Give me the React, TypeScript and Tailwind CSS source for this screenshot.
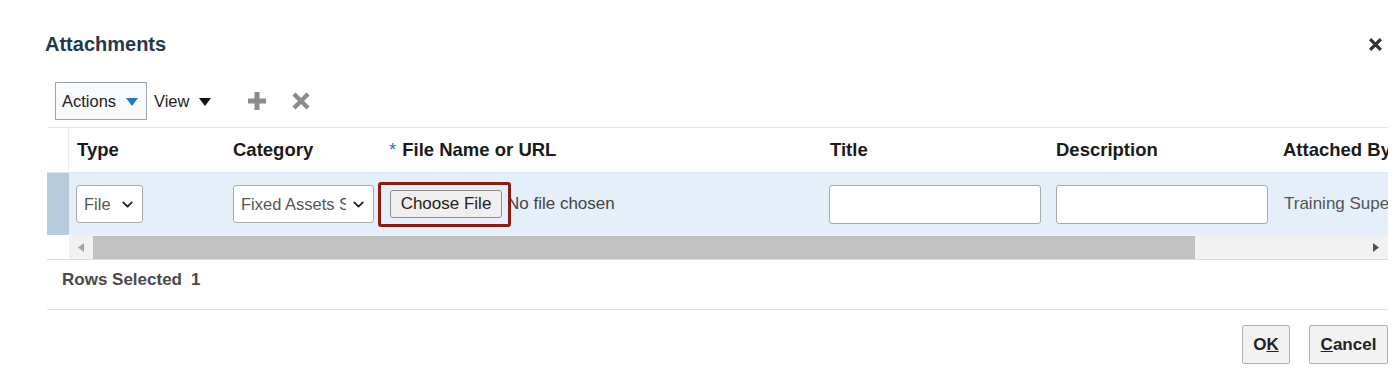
import { ChevronDown } from 'lucide-react';

const font = { fontFamily: '"Liberation Sans", Arial, sans-serif' };

function Caret({ className }: { className: string }) {
  return (
    <svg width="12" height="8" viewBox="0 0 12 8" className={className}>
      <path d="M0 0 L12 0 L6 8 Z" fill="currentColor" />
    </svg>
  );
}

function SelectBox({ label, width }: { label: string; width: string }) {
  return (
    <div
      className={`${width} h-[38px] flex items-center justify-between pl-[7px] pr-[6px] bg-white border border-[#a9a9a9] rounded-[3px] text-[16.5px] text-[#555] overflow-hidden whitespace-nowrap`}
    >
      <span className="overflow-hidden mr-[4px]">{label}</span>
      <ChevronDown className="w-[17px] h-[17px] shrink-0 text-[#222]" strokeWidth={2.5} />
    </div>
  );
}

export default function App() {
  return (
    <div className="w-[1395px] h-[388px] bg-white relative overflow-hidden" style={font}>
      {/* Header */}
      <div className="flex items-center justify-between pl-[45px] pr-[12px] pt-[32px]">
        <h1 className="text-[20px] leading-[24px] font-bold text-[#26384b]">Attachments</h1>
        <svg width="15" height="15" viewBox="0 0 14 14" className="text-[#333]">
          <path d="M2 2 L12 12 M12 2 L2 12" stroke="currentColor" strokeWidth="3" />
        </svg>
      </div>

      {/* Toolbar */}
      <div className="flex items-center pl-[55px] mt-[26px] h-[38px]">
        <div className="h-[38px] w-[92px] flex items-center pl-[6px] border border-[#9aa6b3] bg-[#f9fafb] text-[16.5px] text-[#222]">
          Actions
          <Caret className="ml-[10px] mt-[2px] text-[#1a7bd3]" />
        </div>
        <div className="flex items-center ml-[7px] text-[16.5px] text-[#222]">
          View
          <Caret className="ml-[10px] mt-[2px] text-[#111]" />
        </div>
        <svg width="20" height="20" viewBox="0 0 20 20" className="ml-[36px] text-[#8a8c8e]">
          <path d="M10 1 V19 M1 10 H19" stroke="currentColor" strokeWidth="5" />
        </svg>
        <svg width="20" height="20" viewBox="0 0 20 20" className="ml-[24px] text-[#8a8c8e]">
          <path d="M3 3 L17 17 M17 3 L3 17" stroke="currentColor" strokeWidth="4.5" />
        </svg>
      </div>

      {/* Table */}
      <div className="ml-[47px] w-[1341px] mt-[7px] border-t border-[#e6e6e6]">
        <div className="grid grid-cols-[22px_156px_151px_446px_226px_227px_1fr] h-[44px] items-center text-[18.5px] font-bold text-[#1a1a1a] whitespace-nowrap">
          <div className="h-full border-r border-[#ececec]" />
          <div className="pl-[8px]">Type</div>
          <div className="pl-[8px]">Category</div>
          <div className="pl-[13px]">
            <span className="text-[#1a7bd3] font-normal mr-[6px]">*</span>File Name or URL
          </div>
          <div className="pl-[8px]">Title</div>
          <div className="pl-[8px]">Description</div>
          <div className="pl-[8px] overflow-hidden">Attached By</div>
        </div>

        <div className="grid grid-cols-[22px_156px_151px_446px_226px_227px_1fr] h-[63px] items-center bg-[#e5eff9] border-t border-[#dde7f1]">
          <div className="h-full bg-[#b6cbdc]" />
          <div className="pl-[7px]">
            <SelectBox label="File" width="w-[67px]" />
          </div>
          <div className="pl-[8px]">
            <SelectBox label="Fixed Assets Supporting Documents" width="w-[141px]" />
          </div>
          <div className="pl-[14px] relative flex items-center">
            <button className="h-[28px] w-[112px] bg-[#efefef] border border-[#8f8f8f] rounded-[3px] text-[17px] text-[#222]">
              Choose File
            </button>
            <span className="ml-[5px] text-[17px] text-[#444] whitespace-nowrap">No file chosen</span>
            <div className="absolute left-[2px] top-[-8px] w-[133px] h-[45px] border-[3px] border-[#8c1d10] rounded-[3px]" />
          </div>
          <div className="pl-[7px]">
            <div className="w-[212px] h-[39px] bg-white border border-[#a9a9a9] rounded-[3px]" />
          </div>
          <div className="pl-[8px]">
            <div className="w-[212px] h-[39px] bg-white border border-[#a9a9a9] rounded-[3px]" />
          </div>
          <div className="pl-[9px] text-[17px] text-[#555] whitespace-nowrap overflow-hidden">
            Training Supervisor
          </div>
        </div>

        {/* Scrollbar */}
        <div className="flex h-[25px] border-b border-[#dcdcdc]">
          <div className="w-[22px] bg-white" />
          <div className="flex-1 flex items-center bg-[#f1f1f1] pt-[1px]">
            <div className="w-[24px] flex justify-center">
              <svg width="6" height="9" viewBox="0 0 6 9" className="text-[#a3a3a3]">
                <path d="M6 0 V9 L0 4.5 Z" fill="currentColor" />
              </svg>
            </div>
            <div className="w-[1102px] h-[23px] bg-[#c1c1c1]" />
            <div className="flex-1 flex justify-end pr-[9px]">
              <svg width="6" height="9" viewBox="0 0 6 9" className="text-[#505050]">
                <path d="M0 0 V9 L6 4.5 Z" fill="currentColor" />
              </svg>
            </div>
          </div>
        </div>

        {/* Footer of table */}
        <div className="h-[50px] flex items-center pl-[15px] pb-[9px] border-b border-[#dedede] text-[17px] text-[#4a4a4a]">
          <span className="font-bold">Rows Selected</span>
          <span className="ml-[9px] font-semibold">1</span>
        </div>
      </div>

      {/* Buttons */}
      <div className="flex justify-end gap-[19px] pr-[7px] mt-[15px]">
        <button className="w-[48px] h-[39px] bg-[#f2f2f2] border border-[#b0b0b0] rounded-[2px] text-[17px] font-bold text-[#222]">
          O<span className="underline">K</span>
        </button>
        <button className="w-[79px] h-[39px] bg-[#f2f2f2] border border-[#b0b0b0] rounded-[2px] text-[17px] font-bold text-[#222]">
          <span className="underline">C</span>ancel
        </button>
      </div>
    </div>
  );
}
